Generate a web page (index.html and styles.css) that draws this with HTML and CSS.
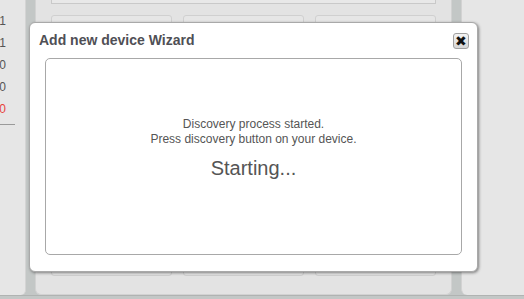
FILE: index.html
```html
<!DOCTYPE html>
<html lang="en">
<head>
  <meta charset="UTF-8" />
  <title>Add new device Wizard</title>
  <link rel="stylesheet" href="styles.css">
</head>
<body>
  <div class="page">
    <div class="side-panel">
      <div class="count">1</div>
      <div class="count">1</div>
      <div class="count">0</div>
      <div class="count">0</div>
      <div class="count alert">0</div>
      <div class="rule"></div>
    </div>
    <div class="main-panel">
      <div class="top-box"></div>
      <div class="columns">
        <div class="column"></div>
        <div class="column"></div>
        <div class="column"></div>
      </div>
    </div>
    <div class="right-panel"></div>
  </div>

  <div class="dialog">
    <div class="dialog-header">
      <h2>Add new device Wizard</h2>
      <button class="close-btn" title="Close">&#x2716;</button>
    </div>
    <div class="dialog-body">
      <p class="info">Discovery process started.<br>Press discovery button on your device.</p>
      <p class="status">Starting...</p>
    </div>
  </div>
</body>
</html>
```

FILE: styles.css
```css
body {
  font-family: "Liberation Sans", Arial, sans-serif;
  background: #c3c7c6;
  color: #555;
  margin: 0;
  padding: 0;
  width: 524px;
  height: 299px;
  overflow: hidden;
  position: relative;
}

.page {
  display: flex;
  height: 295px;
  border-bottom: 1px solid #b0b3b2;
}

.side-panel {
  width: 26px;
  background: #e6e6e6;
  border-right: 1px solid #d4d4d4;
  border-radius: 0 0 5px 0;
  padding-top: 10px;
  box-sizing: border-box;
  overflow: hidden;
}

.count {
  width: 6px;
  text-align: right;
  font-size: 12px;
  line-height: 22px;
  color: #555;
  overflow: hidden;
  direction: rtl;
}

.count.alert {
  color: #e8423c;
}

.rule {
  width: 15px;
  margin-top: 4px;
  border-top: 1px solid #9a9a9a;
}

.main-panel {
  width: 417px;
  margin-left: 9px;
  background: #e3e3e3;
  border: 1px solid #d2d2d2;
  border-top: none;
  border-radius: 0 0 6px 6px;
  padding: 0 15px;
  box-sizing: border-box;
}

.top-box {
  height: 3px;
  border: 1px solid #c9c9c9;
  border-top: none;
  background: #e8e8e8;
}

.columns {
  display: flex;
  gap: 11px;
  margin-top: 11px;
  height: 261px;
}

.column {
  flex: 1;
  background: #e6e6e6;
  border: 1px solid #d0d0d0;
  border-radius: 3px;
}

.right-panel {
  flex: 1;
  margin-left: 9px;
  background: #e6e6e6;
  border-left: 1px solid #d2d2d2;
  border-radius: 0 0 0 6px;
}

.dialog {
  position: absolute;
  left: 29px;
  top: 22px;
  width: 449px;
  height: 250px;
  box-sizing: border-box;
  background: #ffffff;
  border: 1px solid #a9a9a9;
  border-radius: 6px;
  box-shadow: 1px 1px 3px rgba(0, 0, 0, 0.45);
  padding: 0 15px 0 15px;
}

.dialog-header {
  display: flex;
  align-items: center;
  justify-content: space-between;
  height: 34px;
}

.dialog-header h2 {
  margin: 0 0 0 -6px;
  font-size: 14px;
  font-weight: bold;
  color: #4f4f55;
}

.close-btn {
  width: 16px;
  height: 16px;
  padding: 0;
  margin-right: -7px;
  margin-top: 1px;
  border: 1px solid #a0a0a0;
  border-radius: 3px;
  background: linear-gradient(180deg, #f4f4f4 0%, #d6d6d6 100%);
  color: #111;
  font-size: 14px;
  line-height: 14px;
  text-align: center;
  cursor: pointer;
}

.dialog-body {
  height: 197px;
  margin-top: 1px;
  border: 1px solid #a8a8a8;
  border-radius: 5px;
  box-sizing: border-box;
  text-align: center;
  padding-top: 58px;
}

.info {
  margin: 0;
  font-size: 12px;
  line-height: 15px;
  color: #555;
}

.status {
  margin: 10px 0 0;
  font-size: 20px;
  color: #555;
}
```
